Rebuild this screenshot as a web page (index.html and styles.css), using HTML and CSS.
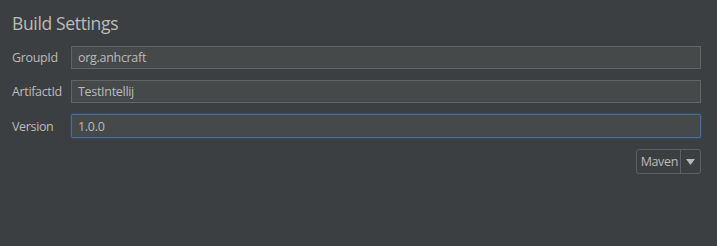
FILE: index.html
```html
<!DOCTYPE html>
<html lang="en">
<head>
    <meta charset="UTF-8">
    <title>Build Settings</title>
    <link rel="stylesheet" href="styles.css">
</head>
<body>
    <!-- Build settings panel -->
    <div class="panel">
        <h1 class="title">Build Settings</h1>
        <div class="form">
            <label class="label">GroupId</label>
            <input class="field" type="text" value="org.anhcraft">
            <label class="label">ArtifactId</label>
            <input class="field" type="text" value="TestIntellij">
            <label class="label">Version</label>
            <input class="field focused" type="text" value="1.0.0">
        </div>
        <div class="actions">
            <div class="combo">
                <span class="combo-text">Maven</span>
                <span class="combo-arrow">
                    <svg width="9" height="6" viewBox="0 0 9 6"><path d="M0 0 H9 L4.5 6 Z" fill="#b8b8b8"/></svg>
                </span>
            </div>
        </div>
    </div>
</body>
</html>
```

FILE: styles.css
```css
/* General Styles */
html, body {
    height: 100%;
}
body {
    margin: 0;
    padding: 0;
    background-color: #3c3f41;
    color: #bbbbbb;
    font-family: 'Open Sans', 'Noto Sans', sans-serif;
    font-size: 12.5px;
    letter-spacing: -0.35px;
}
/* Panel */
.panel {
    padding: 10px 16px 0 12px;
}
.title {
    margin: 0;
    font-size: 17.5px;
    font-weight: 400;
    letter-spacing: -0.35px;
    line-height: 26px;
    height: 36px;
    color: #bbbbbb;
}
/* Form */
.form {
    display: grid;
    grid-template-columns: 59px 1fr;
    row-gap: 11px;
    align-items: center;
}
.label {
    color: #bbbbbb;
}
.field {
    box-sizing: border-box;
    height: 23px;
    margin: 0;
    padding: 0 6px;
    border: 1px solid #646464;
    background-color: #45494a;
    color: #bbbbbb;
    font-family: inherit;
    font-size: 12.5px;
    letter-spacing: -0.3px;
    outline: none;
}
.field.focused {
    height: 24px;
    border: 1px solid #4a6e96;
    border-radius: 2px;
    box-shadow: 0 0 0 1px #2f4b68;
}
/* Actions */
.actions {
    display: flex;
    justify-content: flex-end;
    margin-top: 11px;
}
.combo {
    display: flex;
    height: 25px;
    box-sizing: border-box;
    border: 1px solid #5e6060;
    border-radius: 3px;
}
.combo-text {
    display: flex;
    align-items: center;
    padding: 0 2px 0 4px;
    border-right: 1px solid #5e6060;
}
.combo-arrow {
    display: flex;
    align-items: center;
    justify-content: center;
    width: 19px;
}
```
